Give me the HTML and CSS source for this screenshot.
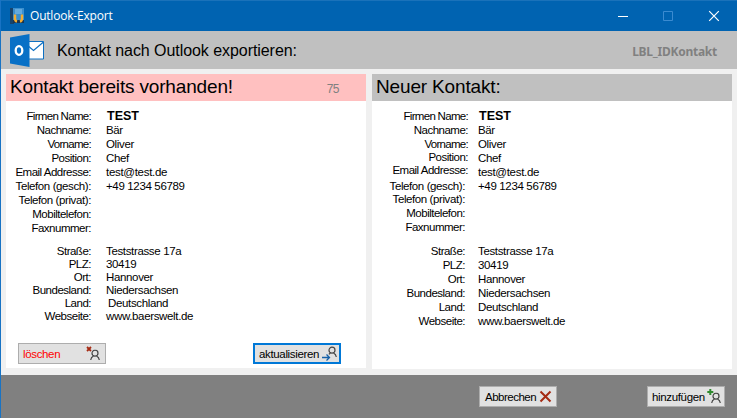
FILE: index.html
```html
<!DOCTYPE html>
<html lang="de">
<head>
<meta charset="utf-8">
<title>Outlook-Export</title>
<link rel="stylesheet" href="styles.css">
</head>
<body>
<svg width="0" height="0" class="defs">
  <symbol id="person" viewBox="0 0 10 11"><circle cx="5" cy="3.7" r="3"/><path d="M.7 10.5C.9 8.3 2 7.2 3.5 6.5M9.3 10.5C9.1 8.3 8 7.2 6.5 6.5"/></symbol>
</svg>
<div class="window">
  <header class="titlebar">
    <svg class="app-icon" width="15" height="16" viewBox="0 0 15 16"><path fill="#17436b" d="M0 0h4v16H0z"/><path fill="#3b8fce" d="M3 0h11v15H3z"/><path fill="#63aade" d="M5 1h7v5H5z"/><path fill="#1a3552" d="M3 12h11v3H3z"/><path d="M5 6.5v4q0 2.5 2 3M12 6.5v4q0 2.5-2 3" fill="none" stroke="#f5ad30" stroke-width="2.4"/></svg>
    <span class="title">Outlook-Export</span>
    <svg class="controls" width="102" height="12" viewBox="0 0 102 12" fill="none"><path d="M0 6.5h10" stroke="#fff"/><path d="M45.500 1.500h9v9h-9z" stroke="#3b8bd0"/><path d="M91.200 1.200l9.600 9.600M100.800 1.200l-9.600 9.600" stroke="#fff" stroke-width="1.200"/></svg>
  </header>
  <div class="banner">
    <svg class="outlook" width="35" height="33" viewBox="0 0 35 33"><path d="M18 7.500h15.500v17.500H18z" fill="#fff" stroke="#0f70c2"/><path d="M17 11l6.500 5.500L33.500 8" fill="none" stroke="#0f70c2" stroke-width="1.200"/><path fill="#0870c6" d="M0 3.500L19.500 0v33L0 29.500z"/><ellipse cx="9" cy="16.500" rx="3.300" ry="4.300" fill="none" stroke="#fff" stroke-width="2.300"/></svg>
    <h1>Kontakt nach Outlook exportieren:</h1>
    <span class="contact-id">LBL_IDKontakt</span>
  </div>
  <main>
    <section class="panel existing">
      <h2><span>Kontakt bereits vorhanden!</span><small>75</small></h2>
      <dl class="fields">
        <div><dt class="tight">Firmen Name:</dt><dd class="company">TEST</dd></div>
        <div><dt>Nachname:</dt><dd>Bär</dd></div>
        <div><dt class="tight">Vorname:</dt><dd>Oliver</dd></div>
        <div><dt>Position:</dt><dd>Chef</dd></div>
        <div><dt>Email Addresse:</dt><dd class="mail">test@test.de</dd></div>
        <div><dt class="wide">Telefon (gesch):</dt><dd>+49 1234 56789</dd></div>
        <div><dt class="wide">Telefon (privat):</dt><dd></dd></div>
        <div><dt>Mobiltelefon:</dt><dd></dd></div>
        <div><dt>Faxnummer:</dt><dd></dd></div>
      </dl>
      <dl class="fields address">
        <div><dt>Straße:</dt><dd>Teststrasse 17a</dd></div>
        <div><dt>PLZ:</dt><dd>30419</dd></div>
        <div><dt>Ort:</dt><dd>Hannover</dd></div>
        <div><dt>Bundesland:</dt><dd>Niedersachsen</dd></div>
        <div><dt>Land:</dt><dd class="shift">Deutschland</dd></div>
        <div><dt>Webseite:</dt><dd class="web">www.baerswelt.de</dd></div>
      </dl>
      <div class="actions">
        <button class="delete"><span>löschen</span><svg width="15" height="15" viewBox="0 0 15 15"><path d="M1 1l4 4M5 1L1 5" stroke="#a52a13" stroke-width="1.800"/><use href="#person" x="4" y="3.500" width="10" height="11"/></svg></button>
        <button class="update"><span>aktualisieren</span><svg width="15" height="15" viewBox="0 0 15 15"><use href="#person" x="5" y="0" width="10" height="12"/><path d="M0 11.500h7M4.500 8.500l3 3-3 3" fill="none" stroke="#e1e1e1" stroke-width="3.500"/><path d="M0 11.500h7M4.500 8.500l3 3-3 3" fill="none" stroke="#1460a8" stroke-width="1.300"/></svg></button>
      </div>
    </section>
    <section class="panel new">
      <h2><span>Neuer Kontakt:</span></h2>
      <dl class="fields">
        <div><dt class="tight">Firmen Name:</dt><dd class="company">TEST</dd></div>
        <div><dt>Nachname:</dt><dd>Bär</dd></div>
        <div><dt class="tight">Vorname:</dt><dd>Oliver</dd></div>
        <div><dt class="up">Position:</dt><dd>Chef</dd></div>
        <div><dt class="up2">Email Addresse:</dt><dd class="mail">test@test.de</dd></div>
        <div class="inset"><dt class="wide">Telefon (gesch):</dt><dd>+49 1234 56789</dd></div>
        <div class="inset"><dt class="up wide">Telefon (privat):</dt><dd></dd></div>
        <div class="inset"><dt class="up">Mobiltelefon:</dt><dd></dd></div>
        <div class="inset"><dt class="up">Faxnummer:</dt><dd></dd></div>
      </dl>
      <dl class="fields address">
        <div class="inset"><dt>Straße:</dt><dd>Teststrasse 17a</dd></div>
        <div class="inset"><dt>PLZ:</dt><dd>30419</dd></div>
        <div class="inset"><dt>Ort:</dt><dd>Hannover</dd></div>
        <div class="inset"><dt>Bundesland:</dt><dd>Niedersachsen</dd></div>
        <div class="inset"><dt>Land:</dt><dd>Deutschland</dd></div>
        <div class="inset"><dt>Webseite:</dt><dd class="web">www.baerswelt.de</dd></div>
      </dl>
    </section>
  </main>
  <footer>
    <button class="cancel"><span>Abbrechen</span><svg width="13" height="13" viewBox="0 0 13 13"><path d="M1.500 1.500l10 10M11.500 1.500l-10 10" stroke="#a52a13" stroke-width="2"/></svg></button>
    <button class="add"><span>hinzufügen</span><svg width="14" height="15" viewBox="0 0 14 15"><path d="M3.300 0v6M.3 3h6" stroke="#2f8a2f" stroke-width="2"/><use href="#person" x="4" y="3.500" width="10" height="11"/></svg></button>
  </footer>
</div>
</body>
</html>
```
FILE: styles.css
```css
* { box-sizing: border-box; }
body { margin: 0; overflow: hidden; font: 12px/14px "Liberation Sans", Arial, sans-serif; color: #000; }
h1, h2, dl, dd { margin: 0; font-weight: normal; }
.defs { position: absolute; }
.window { width: 737px; height: 418px; display: flex; flex-direction: column; background: #f0f0f0; border-left: 1px solid #1873c4; }
.titlebar { height: 31px; flex: none; display: flex; align-items: center; background: #0063b1; border-top: 1px solid #1a72ba; padding: 0 17px 0 9px; color: #fff; }
.title { font: 12px/16px "Open Sans", "Noto Sans", sans-serif; letter-spacing: -0.2px; margin-left: 5px; }
.controls { margin-left: auto; }
.banner { height: 38px; flex: none; display: flex; align-items: center; background: #c0c0c0; padding: 0 20px 0 9px; }
.banner h1 { font-size: 16px; line-height: 20px; margin: 2px 0 0 12px; letter-spacing: -0.06px; }
.contact-id { margin-left: auto; margin-top: 3px; font: bold 12px/16px "Noto Sans", sans-serif; letter-spacing: -0.25px; color: #808080; }
main { height: 306px; flex: none; display: flex; align-items: flex-start; gap: 6px; padding: 5px 0 0 5px; }
.panel { width: 360px; height: 295px; background: #fff; }
.existing { height: 294px; }
h2 { height: 27px; background: #c0c0c0; font-size: 19px; line-height: 26px; letter-spacing: -0.16px; padding: 0 27px 0 4px; display: flex; justify-content: space-between; }
.existing h2 { background: #ffc0c0; }
h2 small { font-size: 12px; line-height: 30px; color: #808080; letter-spacing: -0.5px; }
.fields { padding-top: 8px; font-size: 11.5px; letter-spacing: -0.35px; }
.fields div { display: flex; height: 14px; }
.fields dt { width: 85px; text-align: right; letter-spacing: -0.5px; white-space: nowrap; }
.fields .tight { letter-spacing: -0.7px; }
.fields .wide { letter-spacing: -0.4px; }
.fields dd { margin-left: 15px; }
.new .fields dt { width: 96px; }
.new .fields dd { margin-left: 10px; }
.new .fields .inset dt { width: 93px; }
.new .fields .inset dd { margin-left: 13px; }
.fields .company, .new .fields .company { font-weight: bold; font-size: 12.5px; letter-spacing: 0; }
.fields .company { margin-left: 16px; }
.new .fields .company { margin-left: 11px; }
.fields .up { margin-top: -1px; }
.fields .up2 { margin-top: -2px; }
.fields .shift { margin-left: 17px; }
.fields .mail { letter-spacing: -0.3px; }
.fields .web { letter-spacing: -0.35px; }
.address { padding-top: 9px; }
.existing .address div { height: 13px; }
.actions { display: flex; justify-content: space-between; padding: 21px 25px 0 12px; }
button { height: 21px; width: 88px; display: flex; align-items: center; justify-content: space-between; border: 1px solid #adadad; background: #e1e1e1; padding: 0 4px; font: 11.5px/14px "Liberation Sans", Arial, sans-serif; letter-spacing: -0.35px; color: #000; }
button svg { flex: none; }
use { fill: none; stroke: #444; stroke-width: 1.2px; }
.delete { color: #f00; }
.update { border: 2px solid #0078d7; padding: 0 2px 0 4px; }
footer { flex: 1; display: flex; justify-content: flex-end; align-items: flex-start; gap: 90px; padding: 11px 12px 0 0; background: #808080; }
.cancel { width: 78px; padding: 0 4px 0 5px; letter-spacing: -0.5px; }
.add { width: 78px; padding: 0 3px 0 4px; }
```
